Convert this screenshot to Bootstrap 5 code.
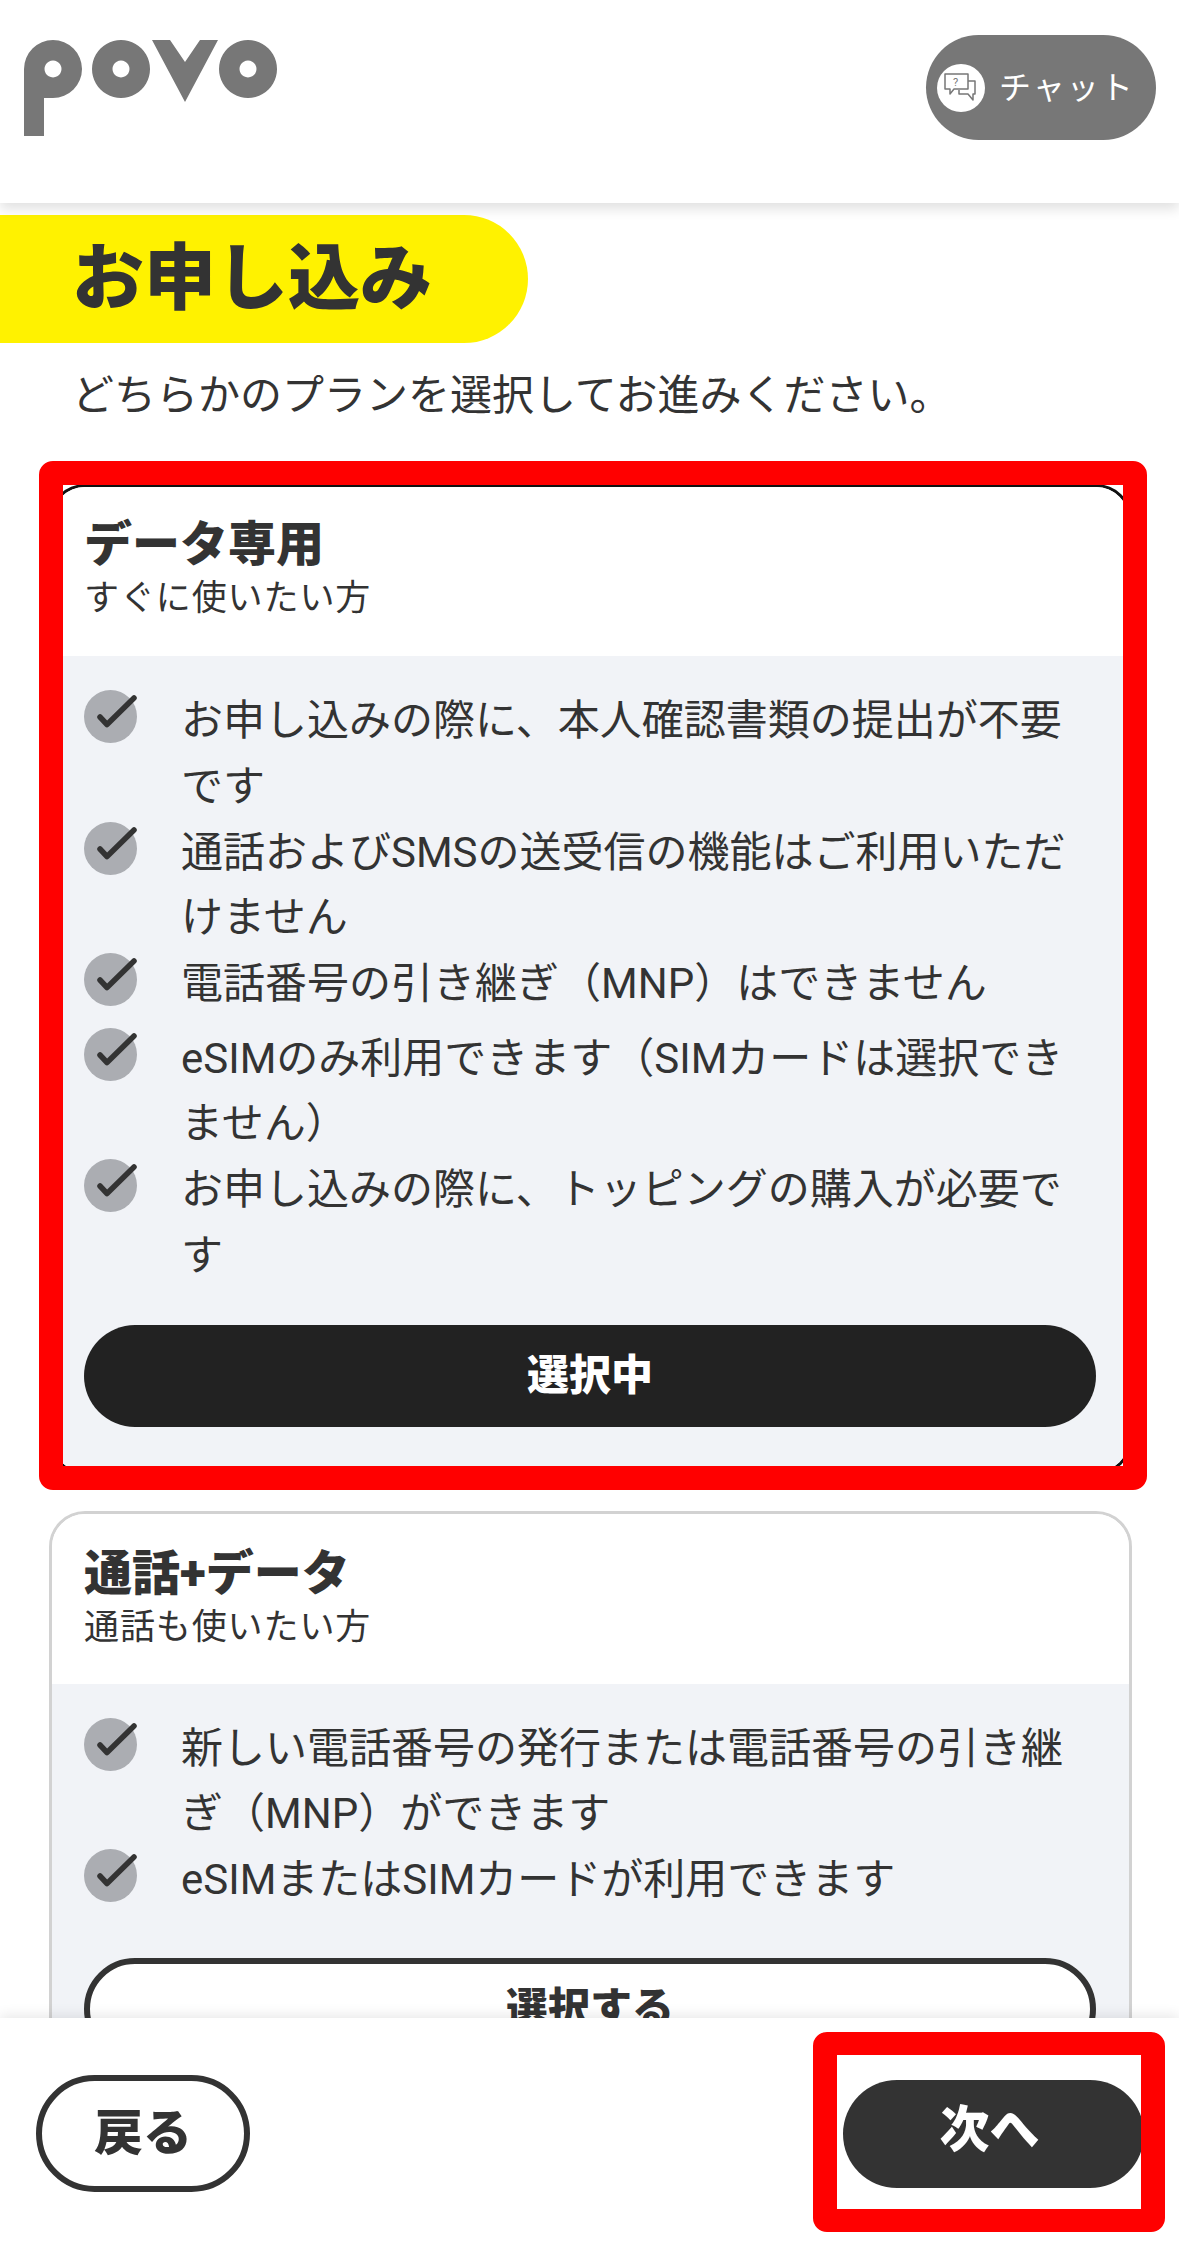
<!DOCTYPE html>
<html lang="ja">
<head>
<meta charset="utf-8">
<title>povo お申し込み</title>
<link href="https://cdn.jsdelivr.net/npm/bootstrap@5.3.0/dist/css/bootstrap.min.css" rel="stylesheet">
<style>
html,body{height:100%;}
body{font-family:Roboto,"Noto Sans CJK JP",sans-serif;color:#333;background:#fff;overflow:hidden;}
.shell{height:2242px;}
.top-bar{height:203px;flex:none;padding:35px 23px 0 24px;box-shadow:0 6px 12px rgba(0,0,0,.12);position:relative;z-index:2;background:#fff;}
.logo-svg{width:256px;height:96px;margin-top:5px;}
.chat-pill{width:230px;height:105px;border-radius:53px;background:#777;color:#fff;font-size:32px;letter-spacing:2px;padding-left:11px;}
.chat-dot{width:48px;height:48px;background:#fff;border-radius:50%;flex:none;margin-right:14px;margin-top:1px;}
.content-area{min-height:0;overflow:hidden;}
.head-pill{width:528px;height:128px;margin-top:12px;background:#fff200;border-radius:0 64px 64px 0;padding-left:72px;}
.head-pill h1{font-size:72px;font-weight:900;margin:0;color:#333;}
.lead-line{font-size:42px;line-height:66px;margin:20px 0 0 72px;}
.plan-wrap{margin:55px 47px 0 49px;}
.plan-wrap + .plan-wrap{margin-top:36px;}
.plan-box{border:3px solid #d2d2d2;border-radius:36px;}
.plan-box.is-active{border-color:#111;}
.plan-head{padding:30px 32px 35px;height:169px;background:#fff;}
.plan-head-short{height:170px;padding-top:32px;}
.plan-name{font-size:48px;font-weight:900;line-height:56px;margin:0;}
.plan-note{font-size:35px;line-height:46px;letter-spacing:.9px;margin-top:3px;}
.plan-body{background:#f1f3f7;padding:31px 33px 45px 32px;}
.feat-list{margin:0 0 37px;padding:0;list-style:none;}
.feat-item{min-height:74.500px;gap:44px;font-size:42px;line-height:65.500px;}
.feat-item span{margin-top:1px;margin-bottom:-.5px;}
.feat-check{width:53px;height:53px;flex:none;margin-top:3px;}
.pill-btn{display:block;width:100%;height:102px;border-radius:51px;font-size:42px;font-weight:900;line-height:1;border:0;padding-bottom:6px;}
.pill-dark{background:#222;color:#fff;}
.pill-line{background:#fff;color:#333;border:6px solid #333;}
.foot-bar{height:224px;flex:none;background:#fff;box-shadow:0 -3px 12px rgba(0,0,0,.09);position:relative;z-index:2;padding:57px 35px 0 36px;}
.foot-back{width:214px;height:117px;border-radius:59px;background:#fff;border:6px solid #333;color:#333;font-size:49px;font-weight:900;}
.foot-next{width:301px;height:108px;border-radius:54px;background:#333;color:#fff;border:0;font-size:50px;font-weight:900;margin-top:5px;display:block;padding:0 12px 8px 4px;}
.red-frame{position:absolute;border:24px solid #f00;border-radius:14px;pointer-events:none;z-index:3;}
.red-a{left:-10px;right:-15px;top:-23px;bottom:-15px;}
.red-b{left:-30px;right:-21px;top:-43px;bottom:-44px;border-width:23px 24px;}
</style>
</head>
<body>
<div class="shell d-flex flex-column">
  <header class="top-bar d-flex justify-content-between align-items-start">
    <svg class="logo-svg" viewBox="0 0 256 96" aria-label="povo">
      <g fill="#777" fill-rule="evenodd">
        <path d="M0 96V29A29 29 0 1 1 29 58H20V96ZM29 20.500a8.500 8.500 0 1 0 .01 0Z"/>
        <path d="M97 0a29 29 0 1 0 .01 0ZM97 20.500a8.500 8.500 0 1 1-.01 0Z"/>
        <path d="M128 0H194L161 62ZM161 22L176 0H146Z"/>
        <path d="M224 0a29 29 0 1 0 .01 0ZM224 20.500a8.500 8.500 0 1 1-.01 0Z"/>
      </g>
    </svg>
    <div class="chat-pill d-flex align-items-center">
      <span class="chat-dot d-flex align-items-center justify-content-center">
        <svg width="34" height="30" viewBox="0 0 34 30" fill="none" stroke="#777" stroke-width="1.500" stroke-linejoin="round">
          <path d="M1 1H24V16H10L6 21V16H1Z"/>
          <path d="M24 8H31V21H29V27L24 21H15V17"/>
          <text x="9" y="12.500" font-size="11" fill="#777" stroke="none" font-family="Roboto, sans-serif">?</text>
        </svg>
      </span>
      <span>チャット</span>
    </div>
  </header>

  <main class="content-area flex-grow-1">
    <div class="head-pill d-flex align-items-center"><h1>お申し込み</h1></div>
    <p class="lead-line">どちらかのプランを選択してお進みください。</p>

    <section class="plan-wrap position-relative">
      <div class="card plan-box is-active overflow-hidden">
        <div class="plan-head">
          <h2 class="plan-name">データ専用</h2>
          <div class="plan-note">すぐに使いたい方</div>
        </div>
        <div class="plan-body">
          <ul class="feat-list">
            <li class="feat-item d-flex"><svg class="feat-check" viewBox="0 0 53 53"><circle cx="26.500" cy="26.500" r="26.500" fill="#abadb2"/><path d="M16 27L23 34.500L50 8" fill="none" stroke="#333" stroke-width="5.500" stroke-linecap="round" stroke-linejoin="round"/></svg><span>お申し込みの際に、本人確認書類の提出が不要です</span></li>
            <li class="feat-item d-flex"><svg class="feat-check" viewBox="0 0 53 53"><circle cx="26.500" cy="26.500" r="26.500" fill="#abadb2"/><path d="M16 27L23 34.500L50 8" fill="none" stroke="#333" stroke-width="5.500" stroke-linecap="round" stroke-linejoin="round"/></svg><span>通話およびSMSの送受信の機能はご利用いただけません</span></li>
            <li class="feat-item d-flex"><svg class="feat-check" viewBox="0 0 53 53"><circle cx="26.500" cy="26.500" r="26.500" fill="#abadb2"/><path d="M16 27L23 34.500L50 8" fill="none" stroke="#333" stroke-width="5.500" stroke-linecap="round" stroke-linejoin="round"/></svg><span>電話番号の引き継ぎ（MNP）はできません</span></li>
            <li class="feat-item d-flex"><svg class="feat-check" viewBox="0 0 53 53"><circle cx="26.500" cy="26.500" r="26.500" fill="#abadb2"/><path d="M16 27L23 34.500L50 8" fill="none" stroke="#333" stroke-width="5.500" stroke-linecap="round" stroke-linejoin="round"/></svg><span>eSIMのみ利用できます（SIMカードは選択できません）</span></li>
            <li class="feat-item d-flex"><svg class="feat-check" viewBox="0 0 53 53"><circle cx="26.500" cy="26.500" r="26.500" fill="#abadb2"/><path d="M16 27L23 34.500L50 8" fill="none" stroke="#333" stroke-width="5.500" stroke-linecap="round" stroke-linejoin="round"/></svg><span>お申し込みの際に、トッピングの購入が必要です</span></li>
          </ul>
          <button type="button" class="btn pill-btn pill-dark">選択中</button>
        </div>
      </div>
      <div class="red-frame red-a"></div>
    </section>

    <section class="plan-wrap">
      <div class="card plan-box overflow-hidden">
        <div class="plan-head plan-head-short">
          <h2 class="plan-name">通話+データ</h2>
          <div class="plan-note">通話も使いたい方</div>
        </div>
        <div class="plan-body">
          <ul class="feat-list">
            <li class="feat-item d-flex"><svg class="feat-check" viewBox="0 0 53 53"><circle cx="26.500" cy="26.500" r="26.500" fill="#abadb2"/><path d="M16 27L23 34.500L50 8" fill="none" stroke="#333" stroke-width="5.500" stroke-linecap="round" stroke-linejoin="round"/></svg><span>新しい電話番号の発行または電話番号の引き継ぎ（MNP）ができます</span></li>
            <li class="feat-item d-flex"><svg class="feat-check" viewBox="0 0 53 53"><circle cx="26.500" cy="26.500" r="26.500" fill="#abadb2"/><path d="M16 27L23 34.500L50 8" fill="none" stroke="#333" stroke-width="5.500" stroke-linecap="round" stroke-linejoin="round"/></svg><span>eSIMまたはSIMカードが利用できます</span></li>
          </ul>
          <button type="button" class="btn pill-btn pill-line">選択する</button>
        </div>
      </div>
    </section>
  </main>

  <footer class="foot-bar d-flex justify-content-between align-items-start">
    <button type="button" class="btn foot-back">戻る</button>
    <div class="position-relative">
      <button type="button" class="btn foot-next">次へ</button>
      <div class="red-frame red-b"></div>
    </div>
  </footer>
</div>
<script src="https://cdn.jsdelivr.net/npm/bootstrap@5.3.0/dist/js/bootstrap.bundle.min.js"></script>
</body>
</html>
